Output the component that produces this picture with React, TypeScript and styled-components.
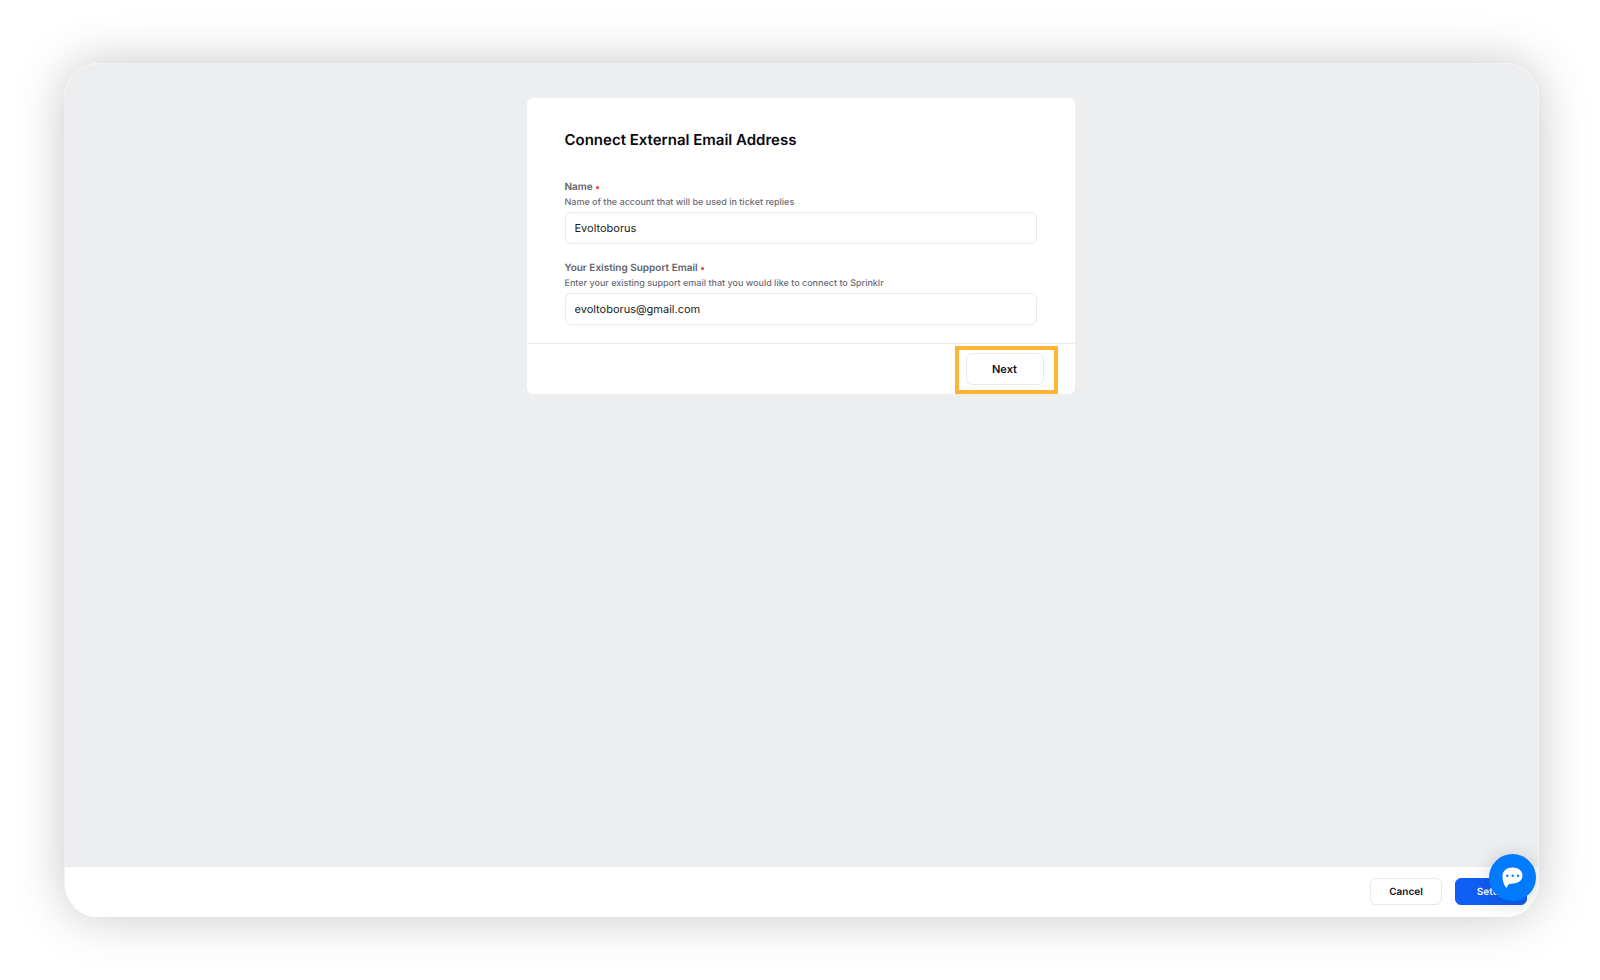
import React, { useState } from "react";
import styled, { createGlobalStyle } from "styled-components";

const GlobalStyle = createGlobalStyle`
  *, *::before, *::after { box-sizing: border-box; }
  body {
    margin: 0;
    background: #ffffff;
    color: #12121a;
    font-family: Inter, "Liberation Sans", sans-serif;
    text-rendering: geometricPrecision;
    -webkit-font-smoothing: antialiased;
  }
  input, button { text-rendering: inherit; }
`;

const Page = styled.div`
  display: flex;
  min-height: 100vh;
  padding: 63px 61px 63px 64px;
`;

const Window = styled.div`
  position: relative;
  display: flex;
  flex: 1;
  flex-direction: column;
  overflow: hidden;
  border: 1px solid #f1f1f3;
  border-bottom-color: #ffffff;
  border-radius: 34px;
  background: #ffffff;
`;

const WindowShadow = styled.div`
  display: flex;
  flex: 1;
  border-radius: 34px;
  box-shadow: 0 0 50px rgba(0, 0, 0, 0.22);
`;

const Content = styled.main`
  display: flex;
  flex: 1;
  justify-content: center;
  align-items: flex-start;
  padding: 34px 26px 34px 24px;
  background: #edeef0;
`;

const Card = styled.form`
  width: 100%;
  max-width: 548px;
  border-radius: 6px;
  background: #ffffff;
`;

const CardBody = styled.div`
  display: flex;
  flex-direction: column;
  gap: 16px;
  padding: 32px 38px 18px;
`;

const Title = styled.h1`
  margin: 0 0 13px;
  color: #08080f;
  font-size: 15px;
  font-weight: 600;
  line-height: 20px;
`;

const Field = styled.div`
  display: flex;
  flex-direction: column;
`;

const Label = styled.label`
  display: flex;
  align-items: center;
  gap: 3px;
  color: #62626e;
  font-size: 10px;
  font-weight: 600;
  line-height: 16px;
`;

const RequiredDot = styled.span`
  width: 3px;
  height: 3px;
  border-radius: 50%;
  background: #fa3a3a;
`;

const Hint = styled.p`
  margin: 0 0 1px;
  color: #6c6c78;
  font-size: 9px;
  font-weight: 500;
  line-height: 16px;
`;

const TextInput = styled.input`
  width: 100%;
  height: 32px;
  padding: 0 9px;
  border: 1px solid #e8e8ea;
  border-radius: 6px;
  outline: none;
  background: #ffffff;
  color: #1a1a24;
  font-family: inherit;
  font-size: 11px;
`;

const CardFooter = styled.div`
  display: flex;
  justify-content: flex-end;
  padding: 2px 17px 0 0;
  border-top: 1px solid #ebebed;
`;

const Highlight = styled.div`
  padding: 3px 10px 5px 7px;
  border: 4px solid #ffb434;
`;

const Button = styled.button<{ $primary?: boolean; $large?: boolean }>`
  width: ${(p) => (p.$large ? 78 : 72)}px;
  height: ${(p) => (p.$large ? 32 : 27)}px;
  display: block;
  padding: 0;
  border: 1px solid ${(p) => (p.$primary ? "#0f5ff5" : "#e8e8ea")};
  border-radius: 6px;
  background: ${(p) => (p.$primary ? "#0f5ff5" : "#ffffff")};
  color: ${(p) => (p.$primary ? "#ffffff" : "#12121a")};
  font-family: inherit;
  font-size: ${(p) => (p.$large ? 11 : 10)}px;
  font-weight: 600;
  cursor: pointer;
`;

const ActionBar = styled.footer`
  display: flex;
  justify-content: flex-end;
  align-items: center;
  gap: 13px;
  height: 49px;
  padding: 0 11px;
  background: #ffffff;
`;

const ChatButton = styled.button`
  position: absolute;
  right: 2px;
  bottom: 15px;
  display: flex;
  align-items: center;
  justify-content: center;
  width: 47px;
  height: 47px;
  padding: 0;
  border: 0;
  border-radius: 50%;
  background: #007aff;
  box-shadow: 0 2px 20px rgba(0, 0, 0, 0.18);
  cursor: pointer;
`;

function ChatIcon() {
  return (
    <svg width="21" height="21" viewBox="0 0 21 21" aria-hidden="true">
      <path
        d="M10.6 0.5C16.3 0.5 20.5 3.7 20.5 8.6C20.5 13.4 16.6 16.4 11.4 16.4C7.7 16.4 5.6 17.4 5.1 20.1C5 20.7 4.5 20.8 4.1 20.4C1.9 18.4 0.5 13.8 0.5 9.1C0.5 3.8 4.9 0.5 10.6 0.5Z"
        fill="#ffffff"
      />
      <circle cx="5.3" cy="8.8" r="1.2" fill="#007aff" />
      <circle cx="10.7" cy="8.8" r="1.2" fill="#007aff" />
      <circle cx="16" cy="8.8" r="1.2" fill="#007aff" />
    </svg>
  );
}

export default function App() {
  const [name, setName] = useState("Evoltoborus");
  const [email, setEmail] = useState("evoltoborus@gmail.com");

  return (
    <>
      <GlobalStyle />
      <Page>
        <WindowShadow>
          <Window>
            <Content>
              <Card onSubmit={(e) => e.preventDefault()}>
                <CardBody>
                  <Title>Connect External Email Address</Title>
                  <Field>
                    <Label htmlFor="name">
                      Name <RequiredDot />
                    </Label>
                    <Hint id="name-hint">Name of the account that will be used in ticket replies</Hint>
                    <TextInput
                      id="name"
                      aria-describedby="name-hint"
                      required
                      value={name}
                      onChange={(e) => setName(e.target.value)}
                    />
                  </Field>
                  <Field>
                    <Label htmlFor="email">
                      Your Existing Support Email <RequiredDot />
                    </Label>
                    <Hint id="email-hint">
                      Enter your existing support email that you would like to connect to Sprinklr
                    </Hint>
                    <TextInput
                      id="email"
                      type="email"
                      aria-describedby="email-hint"
                      required
                      value={email}
                      onChange={(e) => setEmail(e.target.value)}
                    />
                  </Field>
                </CardBody>
                <CardFooter>
                  <Highlight>
                    <Button type="submit" $large>
                      Next
                    </Button>
                  </Highlight>
                </CardFooter>
              </Card>
            </Content>
            <ActionBar>
              <Button type="button">Cancel</Button>
              <Button type="button" $primary>
                Setup
              </Button>
            </ActionBar>
            <ChatButton type="button" aria-label="Open chat">
              <ChatIcon />
            </ChatButton>
          </Window>
        </WindowShadow>
      </Page>
    </>
  );
}
